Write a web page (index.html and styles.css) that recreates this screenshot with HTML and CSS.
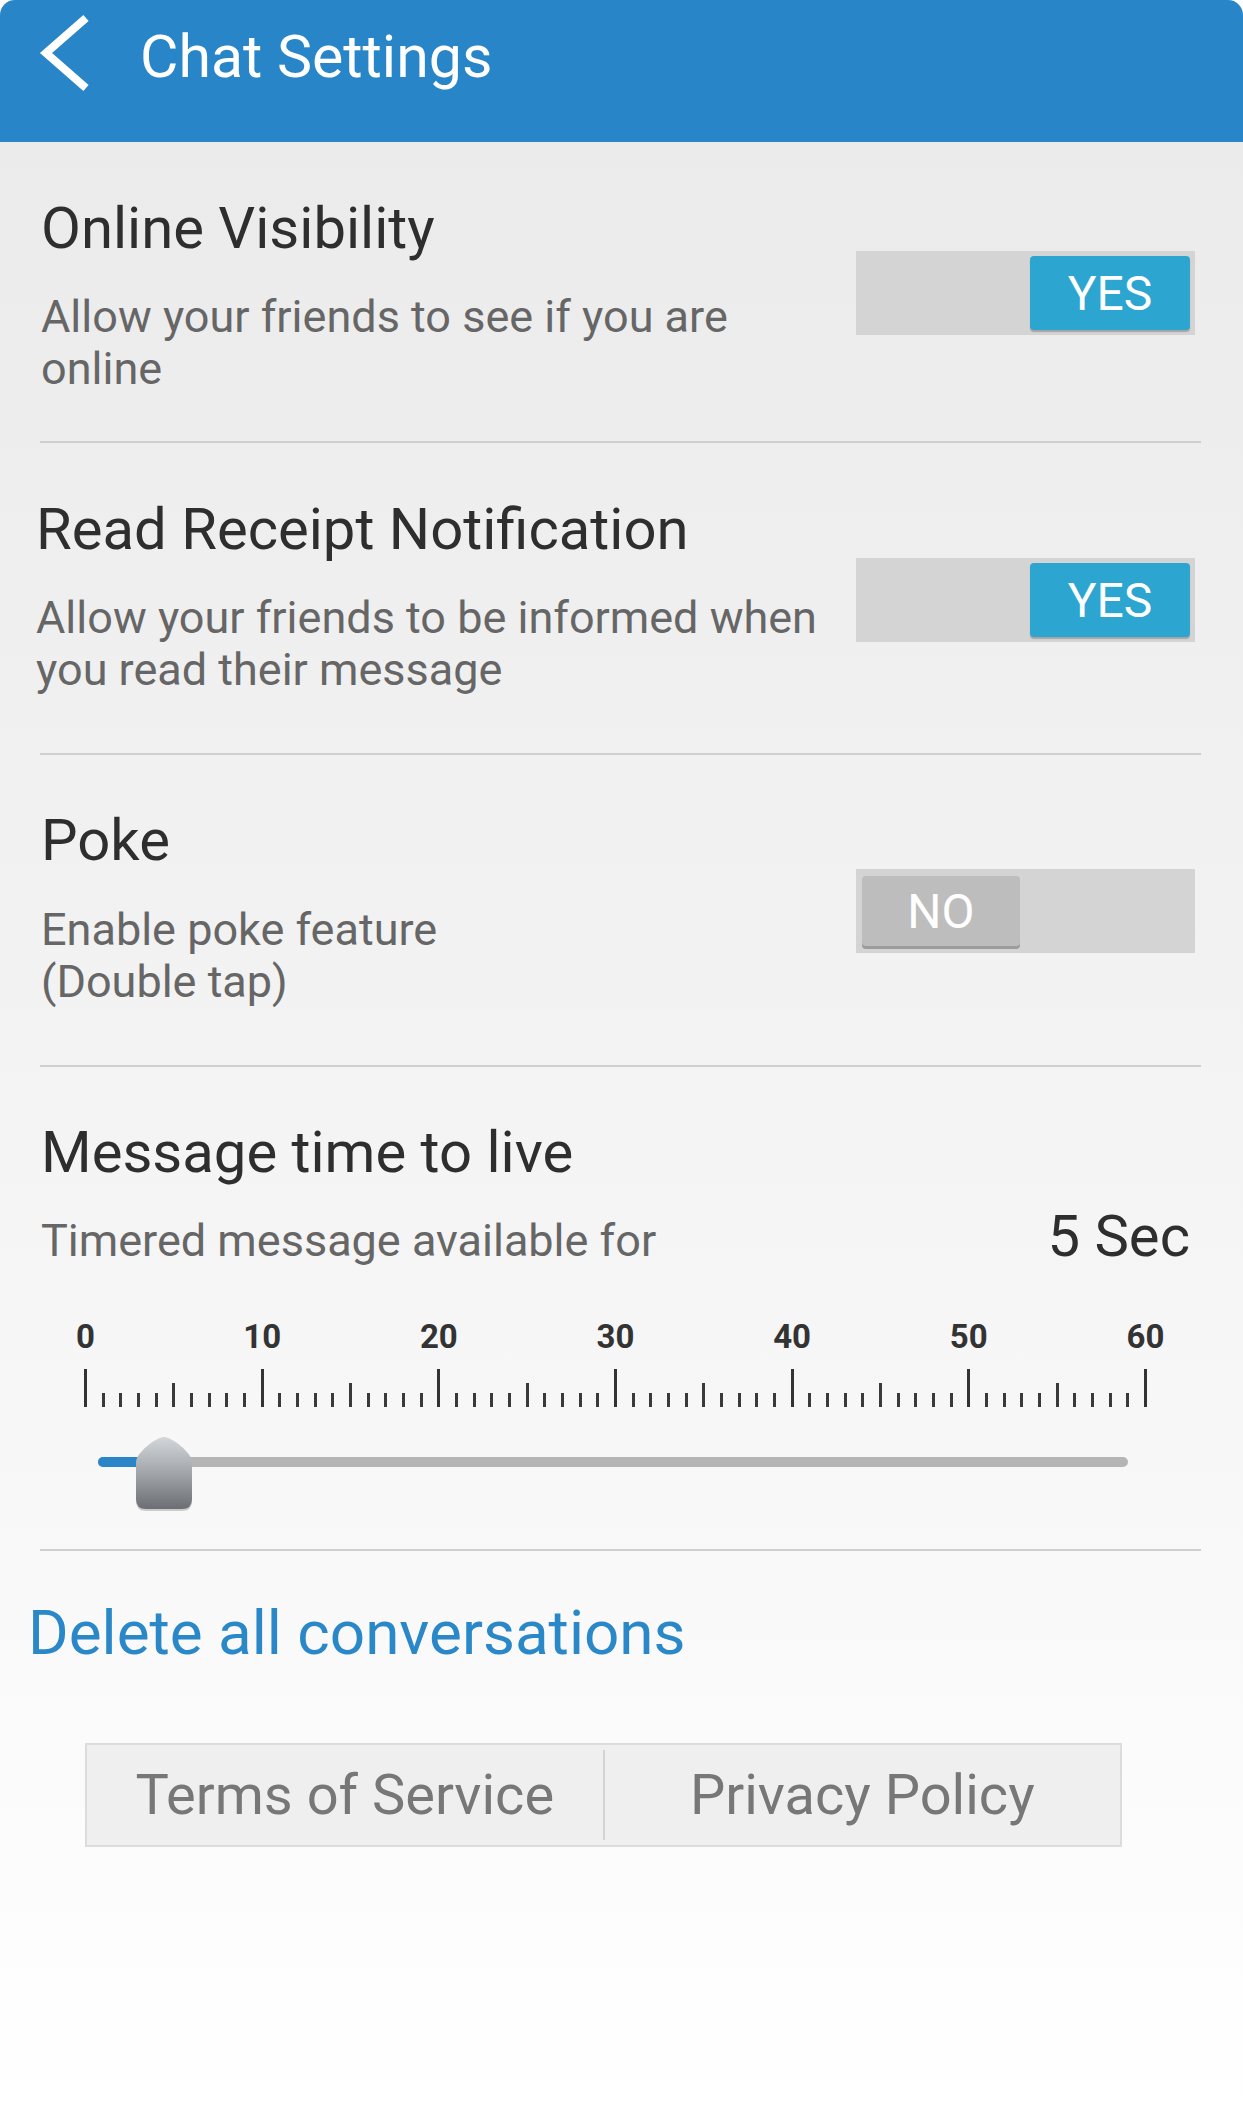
FILE: index.html
```html
<!DOCTYPE html>
<html lang="en">
<head>
<meta charset="utf-8">
<title>Chat Settings</title>
<link rel="stylesheet" href="styles.css">
</head>
<body>
<header class="appbar">
  <svg class="appbar__back" width="60" height="80" viewBox="0 0 60 80" aria-hidden="true">
    <polyline points="50,5 10,40 50,75" fill="none" stroke="#ffffff" stroke-width="8" stroke-linejoin="miter" stroke-linecap="butt"/>
  </svg>
  <h1 class="appbar__title">Chat Settings</h1>
</header>
<main class="content">
  <section class="setting setting--first">
    <div class="setting__text">
      <h2 class="setting__title">Online Visibility</h2>
      <p class="setting__desc">Allow your friends to see if you are<br>online</p>
    </div>
    <div class="toggle toggle--on toggle--first"><span class="toggle__knob">YES</span></div>
  </section>
  <hr class="divider">
  <section class="setting setting--second">
    <div class="setting__text">
      <h2 class="setting__title">Read Receipt Notification</h2>
      <p class="setting__desc">Allow your friends to be informed when<br>you read their message</p>
    </div>
    <div class="toggle toggle--on"><span class="toggle__knob">YES</span></div>
  </section>
  <hr class="divider">
  <section class="setting setting--third">
    <div class="setting__text">
      <h2 class="setting__title">Poke</h2>
      <p class="setting__desc">Enable poke feature<br>(Double tap)</p>
    </div>
    <div class="toggle toggle--off"><span class="toggle__knob">NO</span></div>
  </section>
  <hr class="divider">
  <section class="ttl">
    <h2 class="setting__title">Message time to live</h2>
    <div class="ttl__row">
      <p class="setting__desc">Timered message available for</p>
      <span class="ttl__value">5 Sec</span>
    </div>
    <div class="ruler">
      <div class="ruler__labels">
        <span class="ruler__label"><span>0</span></span>
        <span class="ruler__label"><span>10</span></span>
        <span class="ruler__label"><span>20</span></span>
        <span class="ruler__label"><span>30</span></span>
        <span class="ruler__label"><span>40</span></span>
        <span class="ruler__label"><span>50</span></span>
        <span class="ruler__label"><span>60</span></span>
      </div>
      <div class="ruler__ticks"></div>
    </div>
    <div class="slider">
      <div class="slider__track"></div>
      <div class="slider__fill"></div>
      <svg class="slider__thumb" width="62" height="79" viewBox="0 0 62 79" aria-hidden="true">
        <defs>
          <linearGradient id="thumbGrad" x1="0" y1="0" x2="0" y2="1">
            <stop offset="0" stop-color="#d3d7da"/>
            <stop offset="0.45" stop-color="#a7abaf"/>
            <stop offset="1" stop-color="#6b6f73"/>
          </linearGradient>
        </defs>
        <path d="M31 3.5 C39 3.5 59 19.5 59 28.5 L59 66 Q59 76 49 76 L13 76 Q3 76 3 66 L3 28.5 C3 19.5 23 3.5 31 3.5 Z" fill="rgba(0,0,0,0.18)"/>
        <path d="M31 2 C39 2 59 18 59 27 L59 64 Q59 74 49 74 L13 74 Q3 74 3 64 L3 27 C3 18 23 2 31 2 Z" fill="url(#thumbGrad)"/>
      </svg>
    </div>
  </section>
  <hr class="divider">
  <a class="delete-link" href="#">Delete all conversations</a>
  <nav class="links">
    <a class="links__item" href="#">Terms of Service</a>
    <span class="links__sep"></span>
    <a class="links__item" href="#">Privacy Policy</a>
  </nav>
</main>
</body>
</html>
```

FILE: styles.css
```css
html, body {
  margin: 0;
  padding: 0;
}

body {
  width: 1243px;
  min-height: 2116px;
  background: #ffffff;
  font-family: Roboto, "Noto Sans", "Liberation Sans", sans-serif;
  color: #2e2e2e;
}

.appbar {
  height: 142px;
  background: #2785c8;
  border-radius: 15px 15px 0 0;
  display: flex;
  align-items: flex-start;
  box-sizing: border-box;
}

.appbar__back {
  display: block;
  margin: 13px 0 0 36px;
  flex: none;
}

.appbar__title {
  margin: 22px 0 0 44px;
  font-size: 59px;
  line-height: 70px;
  font-weight: 400;
  color: #ffffff;
}

.content {
  min-height: 1974px;
  background: linear-gradient(to bottom, #ebebeb 0, #f3f3f3 900px, #f9f9f9 1450px, #ffffff 1974px);
  overflow: hidden;
}

.setting {
  display: flex;
  align-items: flex-start;
  padding: 52px 48px 57px 41px;
}

.setting--first {
  padding-bottom: 46px;
}

.setting--second {
  padding-left: 36px;
}

.setting--third {
  padding-top: 51px;
}

.setting__text {
  flex: 1;
}

.setting__title {
  margin: 0;
  font-size: 58px;
  line-height: 68px;
  font-weight: 400;
  color: #2e2e2e;
}

.setting__desc {
  margin: 29px 0 0;
  font-size: 45px;
  line-height: 52px;
  color: #666666;
}

.setting--third .setting__desc {
  margin-top: 30px;
}

.toggle {
  flex: none;
  width: 339px;
  height: 84px;
  box-sizing: border-box;
  background: #d4d4d4;
  display: flex;
  margin-top: 63px;
}

.toggle--first {
  margin-top: 57px;
}

.toggle--on {
  justify-content: flex-end;
  padding: 5px 5px;
}

.toggle--off {
  justify-content: flex-start;
  padding: 7px 6px 5px;
}

.toggle__knob {
  display: flex;
  align-items: center;
  justify-content: center;
  font-size: 48px;
  color: #ffffff;
  border-radius: 4px;
}

.toggle--on .toggle__knob {
  width: 160px;
  height: 74px;
  background: #2ca5d1;
  box-shadow: 0 2px 1px rgba(0, 0, 0, 0.22);
}

.toggle--off .toggle__knob {
  width: 158px;
  height: 70px;
  background: #bdbdbd;
  box-shadow: 0 3px 0 #9c9c9c;
}

.divider {
  height: 2px;
  margin: 0 42px 0 40px;
  border: 0;
  background: #cfcfcf;
}

.ttl {
  padding: 51px 48px 37px 41px;
}

.ttl__row {
  display: flex;
  align-items: baseline;
  justify-content: space-between;
  margin-top: 24px;
}

.ttl__row .setting__desc {
  margin: 0;
}

.ttl__value {
  font-size: 58px;
  line-height: 52px;
  color: #2e2e2e;
  margin-right: 5px;
}

.ruler {
  margin: 50px 0 0 43px;
  width: 1063px;
}

.ruler__labels {
  display: flex;
  justify-content: space-between;
  padding: 0 1.5px;
  height: 40px;
}

.ruler__label {
  width: 0;
  display: flex;
  justify-content: center;
  overflow: visible;
}

.ruler__label span {
  font-size: 33px;
  line-height: 40px;
  font-weight: 700;
  color: #333333;
  white-space: nowrap;
}

.ruler__ticks {
  margin-top: 12px;
  height: 38px;
  background:
    repeating-linear-gradient(90deg, #333333 0 3px, transparent 3px 176.667px) left bottom / 100% 38px no-repeat,
    repeating-linear-gradient(90deg, #3a3a3a 0 3px, transparent 3px 88.333px) left bottom / 100% 24px no-repeat,
    repeating-linear-gradient(90deg, #3a3a3a 0 3px, transparent 3px 17.667px) left bottom / 100% 14px no-repeat;
}

.slider {
  position: relative;
  margin: 31px 0 0 57px;
  width: 1030px;
  height: 74px;
}

.slider__track {
  position: absolute;
  left: 0;
  right: 0;
  top: 19px;
  height: 10px;
  border-radius: 5px;
  background: #b5b5b5;
}

.slider__fill {
  position: absolute;
  left: 0;
  top: 19px;
  width: 60px;
  height: 10px;
  border-radius: 5px 0 0 5px;
  background: #2a86c8;
}

.slider__thumb {
  position: absolute;
  left: 35px;
  top: -3px;
  display: block;
}

.delete-link {
  display: block;
  margin: 46px 0 0 28px;
  font-size: 62px;
  line-height: 72px;
  color: #2a88c9;
  text-decoration: none;
}

.links {
  display: flex;
  width: 1037px;
  height: 104px;
  box-sizing: border-box;
  margin: 74px 0 0 85px;
  border: 2px solid #dcdcdc;
  background: #efefef;
}

.links__item {
  flex: 1;
  display: flex;
  align-items: center;
  justify-content: center;
  font-size: 56px;
  line-height: 100px;
  color: #777777;
  text-decoration: none;
}

.links__sep {
  flex: none;
  width: 2px;
  margin: 5px 0;
  background: #d3d3d3;
}
```
